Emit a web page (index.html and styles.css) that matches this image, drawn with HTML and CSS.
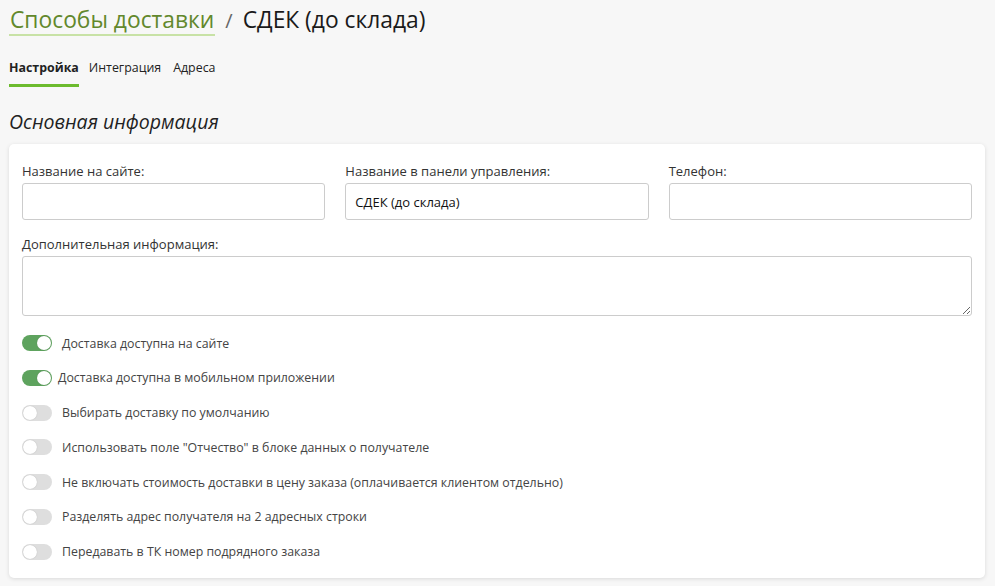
FILE: index.html
```html
<!DOCTYPE html>
<html lang="ru">
<head>
<meta charset="utf-8">
<link rel="stylesheet" href="styles.css">
</head>
<body>
<div class="page">
  <h1 class="title"><a class="crumb" href="#">Способы доставки</a><span class="sep">/</span><span class="current">СДЕК (до склада)</span></h1>
  <nav class="tabs">
    <a class="tab active" href="#">Настройка</a>
    <a class="tab" href="#">Интеграция</a>
    <a class="tab" href="#">Адреса</a>
  </nav>
  <h2 class="section">Основная информация</h2>
  <div class="card">
    <div class="grid3">
      <label class="field"><span class="label">Название на сайте:</span><input class="input" type="text"></label>
      <label class="field"><span class="label">Название в панели управления:</span><input class="input" type="text" value="СДЕК (до склада)"></label>
      <label class="field"><span class="label">Телефон:</span><input class="input" type="text"></label>
    </div>
    <label class="field wide"><span class="label">Дополнительная информация:</span><textarea class="textarea"></textarea></label>
    <div class="toggles">
      <div class="trow"><span class="sw on"></span><span class="tlabel">Доставка доступна на сайте</span></div>
      <div class="trow"><span class="sw on"></span><span class="tlabel tight">Доставка доступна в мобильном приложении</span></div>
      <div class="trow"><span class="sw"></span><span class="tlabel">Выбирать доставку по умолчанию</span></div>
      <div class="trow"><span class="sw"></span><span class="tlabel">Использовать поле "Отчество" в блоке данных о получателе</span></div>
      <div class="trow"><span class="sw"></span><span class="tlabel">Не включать стоимость доставки в цену заказа (оплачивается клиентом отдельно)</span></div>
      <div class="trow"><span class="sw"></span><span class="tlabel">Разделять адрес получателя на 2 адресных строки</span></div>
      <div class="trow"><span class="sw"></span><span class="tlabel">Передавать в ТК номер подрядного заказа</span></div>
    </div>
  </div>
</div>
</body>
</html>
```
FILE: styles.css
```css
html, body { margin: 0; padding: 0; }
body {
  background: #f7f7f7;
  font-family: "Open Sans", "Noto Sans", sans-serif;
  color: #222;
  width: 995px;
  height: 586px;
  overflow: hidden;
}
.page { padding: 0 10px 0 9px; }
.title {
  margin: 0;
  padding-top: 5px;
  font-weight: 400;
  font-size: 22.8px;
  line-height: 30px;
  display: flex;
  align-items: baseline;
}
.crumb {
  color: #62882c;
  text-decoration: none;
  border-bottom: 2px solid #c8e2a6;
  line-height: 28px;
  padding: 0 1px;
}
.sep { color: #666; margin: 0 10px 0 10px; font-size: 20px; }
.current { color: #1a1a1a; }
.tabs {
  display: flex;
  gap: 10px;
  margin-top: 20px;
}
.tab {
  font-size: 12.4px;
  line-height: 18px;
  color: #222;
  text-decoration: none;
  padding: 3px 0 7px;
  border-bottom: 3px solid transparent;
}
.tab.active { font-weight: 700; border-bottom-color: #6cbb2e; }
.tab:nth-child(3) { margin-left: 2px; }
.section {
  margin: 22px 0 0 0;
  font-weight: 400;
  font-style: italic;
  font-size: 19.5px;
  line-height: 26px;
  color: #222;
}
.card {
  margin: 9px 0 0 0;
  background: #fff;
  border-radius: 5px;
  box-shadow: 0 1px 4px rgba(0,0,0,0.12);
  padding: 18px 13px 16px 13px;
  height: 400px;
}
.grid3 {
  display: grid;
  grid-template-columns: 1fr 1fr 1fr;
  column-gap: 20px;
}
.field { display: flex; flex-direction: column; }
.label { font-size: 13px; line-height: 18px; color: #333; margin-bottom: 3px; }
.input {
  height: 37px;
  box-sizing: border-box;
  border: 1px solid #ccc;
  border-radius: 3px;
  padding: 0 9px;
  font-family: inherit;
  font-size: 13px;
  color: #111;
  margin: 0;
}
.wide { margin-top: 15px; }
.textarea {
  height: 60px;
  box-sizing: border-box;
  border: 1px solid #ccc;
  border-radius: 3px;
  resize: vertical;
  margin: 0;
  font-family: inherit;
}
.toggles {
  margin-top: 18px;
  display: flex;
  flex-direction: column;
  gap: 16.8px;
}
.trow { display: flex; align-items: center; height: 18px; }
.sw {
  width: 30px;
  height: 16px;
  border-radius: 8px;
  background: #dedede;
  position: relative;
  flex: none;
  box-sizing: border-box;
}
.sw::after {
  content: "";
  position: absolute;
  top: 1px;
  left: 1px;
  width: 14px;
  height: 14px;
  border-radius: 50%;
  background: #fff;
  box-shadow: 0 0 1px rgba(0,0,0,0.25);
}
.sw.on { background: #5ea35e; }
.sw.on::after { left: 15px; }
.tlabel { font-size: 12.35px; color: #444; margin-left: 10px; }
.tlabel.tight { margin-left: 6px; }
```
